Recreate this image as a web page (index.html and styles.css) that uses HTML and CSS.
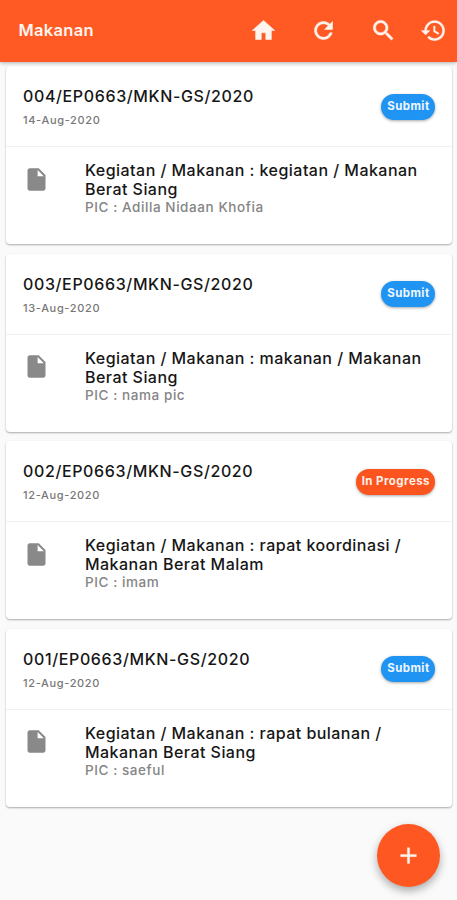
FILE: index.html
```html
<!DOCTYPE html>
<html lang="id">
<head>
<meta charset="utf-8">
<title>Makanan</title>
<link rel="stylesheet" href="styles.css">
</head>
<body>
<svg width="0" height="0" class="defs">
  <symbol id="file" viewBox="0 0 24 24"><path d="M6 2c-1.1 0-2 .9-2 2v16c0 1.100.9 2 2 2h12c1.100 0 2-.9 2-2V8l-6-6H6zm7 7V3.500L18.500 9H13z"/></symbol>
</svg>
<header class="bar">
  <h1>Makanan</h1>
  <nav class="actions">
    <svg viewBox="0 0 24 24"><path d="M10 20v-6h4v6h5v-8h3L12 3 2 12h3v8z"/></svg>
    <svg viewBox="0 0 24 24"><path d="M17.650 6.350C16.200 4.900 14.210 4 12 4c-4.420 0-7.990 3.580-7.990 8s3.570 8 7.990 8c3.730 0 6.840-2.550 7.730-6h-2.080c-.82 2.330-3.040 4-5.650 4-3.310 0-6-2.690-6-6s2.690-6 6-6c1.660 0 3.140.69 4.220 1.780L13 11h7V4l-2.350 2.350z"/></svg>
    <svg viewBox="0 0 24 24"><path d="M15.500 14h-.79l-.28-.27C15.410 12.590 16 11.110 16 9.500 16 5.910 13.090 3 9.500 3S3 5.910 3 9.500 5.910 16 9.500 16c1.610 0 3.090-.59 4.230-1.570l.27.28v.79l5 4.990L20.490 19l-4.990-5zm-6 0C7.010 14 5 11.990 5 9.500S7.010 5 9.500 5 14 7.010 14 9.500 11.990 14 9.500 14z"/></svg>
    <svg class="history" viewBox="0 0 24 24"><path d="M13 3c-4.970 0-9 4.030-9 9H1l3.890 3.890.07.14L9 12H6c0-3.870 3.130-7 7-7s7 3.130 7 7-3.130 7-7 7c-1.930 0-3.680-.79-4.940-2.060l-1.420 1.420C8.270 19.990 10.510 21 13 21c4.970 0 9-4.030 9-9s-4.030-9-9-9zm-1 5v5l4.280 2.540.72-1.210-3.500-2.080V8H12z"/></svg>
  </nav>
</header>
<main class="list">
  <article class="card">
    <div class="head"><div><h2>004/EP0663/MKN-GS/2020</h2><time>14-Aug-2020</time></div><span class="chip">Submit</span></div>
    <div class="detail"><svg><use href="#file"/></svg><div><p class="title">Kegiatan / Makanan : kegiatan / Makanan<br>Berat Siang</p><p class="pic">PIC : Adilla Nidaan Khofia</p></div></div>
  </article>
  <article class="card">
    <div class="head"><div><h2>003/EP0663/MKN-GS/2020</h2><time>13-Aug-2020</time></div><span class="chip">Submit</span></div>
    <div class="detail"><svg><use href="#file"/></svg><div><p class="title">Kegiatan / Makanan : makanan / Makanan<br>Berat Siang</p><p class="pic">PIC : nama pic</p></div></div>
  </article>
  <article class="card">
    <div class="head"><div><h2>002/EP0663/MKN-GS/2020</h2><time>12-Aug-2020</time></div><span class="chip progress">In Progress</span></div>
    <div class="detail"><svg><use href="#file"/></svg><div><p class="title">Kegiatan / Makanan : rapat koordinasi /<br>Makanan Berat Malam</p><p class="pic">PIC : imam</p></div></div>
  </article>
  <article class="card">
    <div class="head"><div><h2>001/EP0663/MKN-GS/2020</h2><time>12-Aug-2020</time></div><span class="chip">Submit</span></div>
    <div class="detail"><svg><use href="#file"/></svg><div><p class="title">Kegiatan / Makanan : rapat bulanan /<br>Makanan Berat Siang</p><p class="pic">PIC : saeful</p></div></div>
  </article>
</main>
<button class="fab" aria-label="Tambah"><svg viewBox="0 0 24 24"><path d="M19 13h-6v6h-2v-6H5v-2h6V5h2v6h6v2z"/></svg></button>
</body>
</html>
```
FILE: styles.css
```css
* { box-sizing: border-box; margin: 0; padding: 0; }
body { width: 457px; height: 900px; overflow: hidden; background: #fafafa; font-family: Inter, "Liberation Sans", sans-serif; color: #161616; }
.defs { position: absolute; }
svg { display: block; fill: currentColor; }
.bar { position: relative; z-index: 1; height: 61.500px; display: flex; align-items: center; justify-content: space-between; padding: 0 10.500px 0 18.500px; background: #ff5a23; color: #fff5ee; box-shadow: 0 1px 4px rgba(0,0,0,.3); }
.bar h1 { position: relative; top: -.5px; font-size: 16.500px; font-weight: 600; letter-spacing: .3px; }
.actions { display: flex; gap: 33px; }
.actions svg { width: 27px; height: 27px; stroke: currentColor; stroke-width: .5; }
.actions .history { margin-left: -10.500px; stroke-width: .2; }
.list { display: flex; flex-direction: column; gap: 9.300px; padding: 4.500px 5px 0 6px; }
.card { height: 178.300px; background: #fff; border-radius: 4px; box-shadow: 0 1px 2px rgba(0,0,0,.32); }
.head { height: 81px; display: flex; justify-content: space-between; padding: 20px 17px 0; border-bottom: 1px solid #f0f0f0; }
.head h2 { font-size: 16px; line-height: 20px; font-weight: 500; letter-spacing: .63px; white-space: nowrap; }
.head time { display: block; margin-top: 6px; font-size: 11px; line-height: 16px; font-weight: 500; letter-spacing: .66px; color: #777; }
.chip { height: 26px; margin-top: 7.500px; padding: 0 5.500px 0 6px; border-radius: 13px; background: #2094f3; color: #eef7ff; font-size: 11.500px; line-height: 25px; font-weight: 700; letter-spacing: .4px; white-space: nowrap; box-shadow: 0 1px 3px rgba(0,0,0,.35); }
.chip.progress { padding: 0 5px 0 5.500px; letter-spacing: .45px; background: #fb541e; color: #fff0e8; }
.detail { display: flex; padding: 14px 17px 0 16.500px; }
.detail svg { flex: none; width: 27px; height: 27px; margin: 4.500px 35.500px 0 0; color: #898989; }
.title { font-size: 16px; line-height: 19px; font-weight: 500; letter-spacing: .46px; white-space: nowrap; }
.pic { font-size: 13.500px; line-height: 17px; font-weight: 500; letter-spacing: .58px; color: #858585; white-space: nowrap; }
.fab { position: absolute; left: 377px; top: 824px; width: 63px; height: 63px; display: grid; place-items: center; border: 0; border-radius: 50%; background: #ff5722; color: #fff4ee; box-shadow: 0 4px 9px rgba(0,0,0,.32); }
.fab svg { width: 27px; height: 27px; stroke: currentColor; stroke-width: .3; }
```
